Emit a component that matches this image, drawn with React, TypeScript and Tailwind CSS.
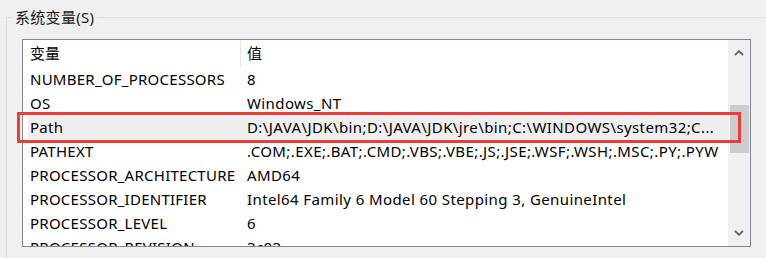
const rows: [string, string][] = [
  ["NUMBER_OF_PROCESSORS", "8"],
  ["OS", "Windows_NT"],
  ["Path", "D:\\JAVA\\JDK\\bin;D:\\JAVA\\JDK\\jre\\bin;C:\\WINDOWS\\system32;C..."],
  ["PATHEXT", ".COM;.EXE;.BAT;.CMD;.VBS;.VBE;.JS;.JSE;.WSF;.WSH;.MSC;.PY;.PYW"],
  ["PROCESSOR_ARCHITECTURE", "AMD64"],
  ["PROCESSOR_IDENTIFIER", "Intel64 Family 6 Model 60 Stepping 3, GenuineIntel"],
  ["PROCESSOR_LEVEL", "6"],
  ["PROCESSOR_REVISION", "3c03"],
];

function Chevron({ up }: { up?: boolean }) {
  return (
    <svg width="10" height="6" viewBox="0 0 10 6" className="block">
      <path
        d={up ? "M1 5.2 L5 1.2 L9 5.2" : "M1 0.8 L5 4.8 L9 0.8"}
        fill="none"
        stroke="#606060"
        strokeWidth="1.8"
      />
    </svg>
  );
}

export default function App() {
  return (
    <div className="relative h-[258px] w-[766px] overflow-hidden bg-[#f0f0f0] font-['Noto_Sans','Noto_Sans_CJK_SC',sans-serif] text-[15px] text-black">
      <div className="relative ml-[6px] mt-[17px] h-[260px] border-l border-t border-[#dcdcdc]">
        <span className="absolute left-[5px] top-[-10px] bg-[#f0f0f0] px-[3px] leading-[18px] tracking-[0.3px] text-[#1a1a1a]">
          系统变量(S)
        </span>

        <div className="ml-[15px] mt-[21px] flex h-[208px] w-[729px] border border-[#828790] bg-white">
          <div className="w-[705px] overflow-hidden">
            <div className="flex h-[27px] items-center">
              <div className="flex h-[25px] w-[218px] items-center border-r border-[#e5e5e5] pl-[7px]">变量</div>
              <div className="pl-[6px]">值</div>
            </div>
            {rows.map(([name, value]) => (
              <div
                key={name}
                className={
                  name === "Path"
                    ? "ml-[5px] flex h-[24px] items-center bg-[#efefef]"
                    : "ml-[5px] flex h-[24px] items-center"
                }
              >
                <div className="w-[213px] shrink-0 pl-[2px] tracking-[0.25px] whitespace-nowrap">{name}</div>
                <div className="overflow-hidden pl-[6px] tracking-[0.4px] whitespace-nowrap">{value}</div>
              </div>
            ))}
          </div>

          <div className="flex w-[22px] flex-col items-center bg-[#f0f0f0]">
            <div className="flex h-[24px] items-center justify-center pt-[2px]">
              <Chevron up />
            </div>
            <div className="mt-[41px] h-[48px] w-[19px] bg-[#cdcdcd]" />
            <div className="flex-1" />
            <div className="flex h-[24px] items-center justify-center pb-[2px]">
              <Chevron />
            </div>
          </div>
        </div>
      </div>

      <div className="absolute left-[17px] top-[112px] h-[31px] w-[724px] border-[3px] border-[#ef3b3b]" />
    </div>
  );
}
